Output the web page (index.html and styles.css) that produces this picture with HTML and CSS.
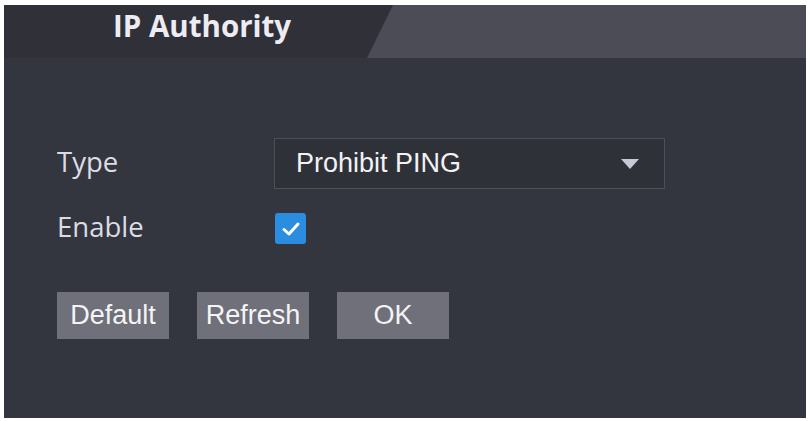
FILE: index.html
```html
<!doctype html>
<html lang="en">
<head>
	<meta charset="utf-8">
	<title>IP Authority</title>
	<link rel="stylesheet" href="styles.css">
</head>
<body>
	<div class="panel">
		<div class="tabs">
			<div class="tab">IP Authority</div>
		</div>

		<div class="form">
			<div class="row">
				<label class="label">Type</label>
				<div class="select">
					<span>Prohibit PING</span>
					<span class="arrow"></span>
				</div>
			</div>
			<div class="row row-check">
				<label class="label">Enable</label>
				<span class="checkbox">
					<svg width="20" height="16" viewBox="0 0 20 16"><path d="M3 8.5 L8 13 L17 3" fill="none" stroke="#fff" stroke-width="3" stroke-linecap="round" stroke-linejoin="round"/></svg>
				</span>
			</div>
			<div class="buttons">
				<button>Default</button>
				<button>Refresh</button>
				<button>OK</button>
			</div>
		</div>
	</div>
</body>
</html>
```

FILE: styles.css
```css
html, body {
	margin: 0;
	padding: 0;
	background: #fff;
}
body {
	font-family: "Open Sans", "Liberation Sans", sans-serif;
	color: #e6e6ec;
}
.panel {
	margin: 5px 4px 0;
	width: 802px;
	height: 413px;
	background: #34363f;
}
.tabs {
	height: 53px;
	background: #4b4c56;
}
.tab {
	width: 392px;
	height: 53px;
	box-sizing: border-box;
	padding-left: 109px;
	background: #2f3038;
	clip-path: polygon(0 0, 389px 0, 363px 100%, 0 100%);
	font-weight: 700;
	font-size: 29.5px;
	line-height: 42px;
	color: #ececf2;
}
.form {
	padding: 80px 0 0 53px;
}
.row {
	display: flex;
	align-items: center;
	height: 51px;
}
.row-check {
	margin-top: 14px;
}
.label {
	width: 217px;
	font-size: 27.5px;
	line-height: 1;
	padding-bottom: 4px;
	color: #dcdce4;
}
.select {
	width: 391px;
	height: 51px;
	box-sizing: border-box;
	border: 1px solid #4c4e58;
	background: #2f3139;
	display: flex;
	align-items: center;
	justify-content: space-between;
	padding: 0 25px 0 21px;
	font-family: "Liberation Sans", Arial, sans-serif;
	font-size: 27px;
	color: #f2f2f4;
}
.arrow {
	width: 0;
	height: 0;
	border-left: 9px solid transparent;
	border-right: 9px solid transparent;
	border-top: 10px solid #c8c8d6;
}
.checkbox {
	width: 31px;
	height: 31px;
	margin-left: 1px;
	border-radius: 3px;
	background: #2b8de0;
	display: flex;
	align-items: center;
	justify-content: center;
}
.buttons {
	display: flex;
	gap: 28px;
	margin-top: 38px;
}
button {
	width: 112px;
	height: 47px;
	border: 0;
	padding: 0;
	background: #6f7079;
	font-family: "Liberation Sans", Arial, sans-serif;
	font-size: 27px;
	color: #f4f4f6;
}
```
